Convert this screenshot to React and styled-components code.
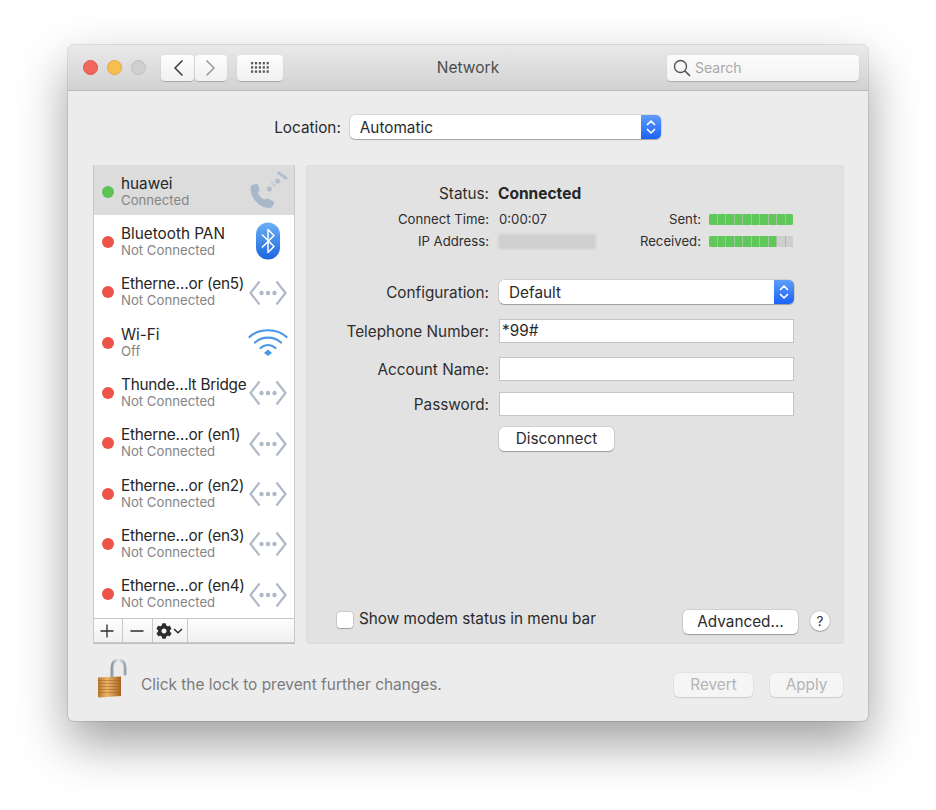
import React from 'react'
import styled, { createGlobalStyle } from 'styled-components'
import { FaCog } from 'react-icons/fa'

const Global = createGlobalStyle`
html, body {
  margin: 0;
  padding: 0;
  background: #fff;
}
body {
  font-family: Inter, "Liberation Sans", sans-serif;
  color: #2a2a2a;
  -webkit-font-smoothing: antialiased;
}
`

const Page = styled.div`
width: 936px;
height: 810px;
box-sizing: border-box;
padding: 45px 68px 0;
overflow: hidden;
`
const Window = styled.div`
width: 800px;
height: 676px;
border-radius: 6px;
background: #ececec;
box-shadow: 0 0 0 1px rgba(0, 0, 0, 0.1), 0 22px 50px rgba(0, 0, 0, 0.38);
display: flex;
flex-direction: column;
overflow: hidden;
`
const TitleBar = styled.div`
box-sizing: border-box;
height: 46px;
flex: none;
padding: 0 9px;
display: grid;
grid-template-columns: 1fr auto 1fr;
align-items: center;
background: linear-gradient(#e9e9e9, #d2d2d2);
border-bottom: 1px solid #b9b9b9;
`
const TitleLeft = styled.div`
display: flex;
align-items: center;
padding-left: 6px;
`
const Lights = styled.div`
display: flex;
gap: 9px;
margin-right: 15px;
`
const Light = styled.span`
width: 15px;
height: 15px;
box-sizing: border-box;
border-radius: 50%;
background: ${p => p.color};
border: 1px solid ${p => p.edge};
`
const NavGroup = styled.div`
display: flex;
gap: 1px;
margin-right: 10px;
`
const ToolButton = styled.div`
width: ${p => p.w}px;
height: 26px;
border-radius: 4px;
background: linear-gradient(#fdfdfd, #f1f1f1);
box-shadow: 0 1px 1px rgba(0, 0, 0, 0.22);
display: flex;
align-items: center;
justify-content: center;
`
const Title = styled.div`
font-size: 15.5px;
color: #4c4c4c;
`
const SearchBox = styled.div`
justify-self: end;
box-sizing: border-box;
width: 192px;
height: 26px;
border-radius: 4px;
background: linear-gradient(#fcfcfc, #f3f3f3);
box-shadow: 0 1px 1px rgba(0, 0, 0, 0.2);
display: flex;
align-items: center;
gap: 4px;
padding-left: 6px;
font-size: 14px;
color: #a9a9a9;
`
const Body = styled.div`
flex: 1;
display: flex;
flex-direction: column;
padding: 24px 24px 0 25px;
`
const LocationRow = styled.div`
display: flex;
justify-content: center;
align-items: center;
gap: 9px;
margin-left: -2px;
font-size: 15.3px;
`
const SelectBox = styled.div`
width: ${p => p.w}px;
height: 24px;
border-radius: 5px;
background: #fff;
box-shadow: 0 0 0 0.5px rgba(0, 0, 0, 0.16), 0 1px 1px rgba(0, 0, 0, 0.24);
display: flex;
align-items: center;
justify-content: space-between;
overflow: hidden;
font-size: 15.3px;
`
const SelectText = styled.span`
padding-left: 10px;
`
const Stepper = styled.span`
width: 20px;
height: 100%;
background: linear-gradient(#5f9dfb, #1a62f6);
display: flex;
align-items: center;
justify-content: center;
`
const Main = styled.div`
margin-top: 26px;
display: flex;
gap: 11px;
height: 479px;
`
const Sidebar = styled.div`
box-sizing: border-box;
width: 202px;
display: flex;
flex-direction: column;
background: #fff;
box-shadow: inset 0 0 0 1px #c9c9c9;
border-bottom: 1px solid #bdbdbd;
`
const List = styled.div`
flex: 1;
display: flex;
flex-direction: column;
padding: 0 1px;
`
const Row = styled.div`
flex: 1;
display: flex;
align-items: center;
padding: 0 6px 0 8px;
background: ${p => (p.selected ? '#dcdcdc' : 'transparent')};
`
const Dot = styled.span`
width: 12px;
height: 12px;
flex: none;
border-radius: 50%;
margin-top: 3px;
background: ${p => (p.on ? '#5cc453' : '#ec5449')};
`
const RowText = styled.div`
flex: 1;
margin: 3px 0 0 7px;
min-width: 0;
white-space: nowrap;
`
const RowName = styled.div`
font-size: 15.3px;
line-height: 17px;
letter-spacing: ${p => (p.cut ? '-0.23px' : 'normal')};
color: #262626;
`
const RowSub = styled.div`
font-size: 13.2px;
line-height: 17px;
color: #858585;
`
const RowIcon = styled.span`
width: 40px;
flex: none;
display: flex;
justify-content: center;
margin-top: 2px;
`
const BottomBar = styled.div`
height: 23px;
flex: none;
margin: 0 1px 1px;
display: flex;
background: linear-gradient(#fdfdfd, #f1f1f1);
border-top: 1px solid #c6c6c6;
`
const BarButton = styled.div`
width: ${p => p.w}px;
box-sizing: border-box;
border-right: 1px solid #c9c9c9;
padding-right: 2px;
display: flex;
align-items: center;
justify-content: center;
gap: 1px;
color: #2c2c2c;
`
const Panel = styled.div`
flex: 1;
box-sizing: border-box;
border-radius: 4px;
background: #e2e2e2;
box-shadow: inset 0 0 0 1px #dcdcdc;
display: flex;
flex-direction: column;
padding: 18px 50px 10px 0;
`
const FormRow = styled.div`
display: flex;
align-items: center;
gap: 9px;
margin-top: ${p => p.top || 0}px;
min-height: 20px;
`
const Label = styled.div`
width: 183px;
margin-right: 1px;
flex: none;
text-align: right;
font-size: ${p => (p.small ? 13.2 : 15.3)}px;
color: #2e2e2e;
`
const StatusValue = styled.div`
margin-left: -1px;
font-size: 15.5px;
font-weight: 700;
color: #262626;
`
const PlainValue = styled.div`
font-size: 13.2px;
color: #2e2e2e;
`
const BlurValue = styled.div`
width: 98px;
height: 15px;
margin-left: -1px;
background: #cfcfcf;
filter: blur(1.5px);
`
const MeterWrap = styled.div`
margin-left: auto;
display: flex;
align-items: center;
gap: 8px;
font-size: 13.2px;
color: #2e2e2e;
`
const Meter = styled.div`
width: 84px;
height: 11px;
border-radius: 2px;
overflow: hidden;
display: grid;
grid-template-columns: repeat(10, 1fr);
gap: 1px;
margin-right: 1px;
background: #a3c4a0;
`
const Seg = styled.span`
background: ${p => (p.on ? '#5fc858' : '#cfcfcf')};
`
const TextInput = styled.div`
box-sizing: border-box;
width: 295px;
height: 24px;
padding-left: 3px;
background: #fff;
box-shadow: inset 0 0 0 1px #c4c4c4;
font-size: 15.3px;
line-height: 23px;
`
const PushButton = styled.div`
box-sizing: border-box;
width: ${p => p.w}px;
height: 24px;
padding-bottom: 1px;
border-radius: 5px;
background: ${p => (p.disabled ? '#f5f5f5' : '#fff')};
color: ${p => (p.disabled ? '#b4b4b4' : '#2a2a2a')};
box-shadow: 0 0 0 0.5px rgba(0, 0, 0, ${p => (p.disabled ? 0.08 : 0.16)}), 0 1px 1px rgba(0, 0, 0, ${p => (p.disabled ? 0.1 : 0.24)});
display: flex;
align-items: center;
justify-content: center;
font-size: 15.3px;
`
const PanelBottom = styled.div`
margin-top: auto;
display: flex;
align-items: center;
padding-left: 31px;
margin-right: -36px;
font-size: 15.3px;
`
const Check = styled.span`
width: 16px;
height: 16px;
box-sizing: border-box;
margin-right: 6px;
margin-top: -5px;
border-radius: 3px;
background: #fff;
box-shadow: 0 0 0 0.5px rgba(0, 0, 0, 0.2), 0 1px 1px rgba(0, 0, 0, 0.2);
`
const CheckLabel = styled.span`
margin-top: -7px;
flex: 1;
`
const Help = styled.div`
width: 20px;
height: 20px;
margin: -2px 0 0 12px;
border-radius: 50%;
background: #fff;
box-shadow: 0 0 0 0.5px rgba(0, 0, 0, 0.14), 0 1px 1px rgba(0, 0, 0, 0.24);
display: flex;
align-items: center;
justify-content: center;
font-size: 13.5px;
`
const Footer = styled.div`
display: flex;
align-items: center;
margin-top: 15px;
padding-left: 4px;
padding-right: 1px;
`
const LockText = styled.div`
margin: 11px 0 0 14px;
flex: 1;
font-size: 15.4px;
color: #7b7b7b;
`
const FooterButtons = styled.div`
display: flex;
gap: 17px;
margin-top: 11px;
`

const UpDown = () => (
  <svg width="12" height="18" viewBox="0 0 12 18" fill="none" stroke="#fff" strokeWidth="1.7" strokeLinecap="round" strokeLinejoin="round">
    <path d="M2.5 6.5 L6 3 L9.5 6.5" />
    <path d="M2.5 11.5 L6 15 L9.5 11.5" />
  </svg>
)

const Select = ({ w, children }) => (
  <SelectBox w={w}>
    <SelectText>{children}</SelectText>
    <Stepper><UpDown /></Stepper>
  </SelectBox>
)

const Chevron = ({ dir, color }) => (
  <svg width="12" height="18" viewBox="0 0 12 18" fill="none" stroke={color} strokeWidth="1.7" strokeLinecap="round" strokeLinejoin="round">
    <path d={dir === 'left' ? 'M10 2 L3 9 L10 16' : 'M2 2 L9 9 L2 16'} />
  </svg>
)

const GridIcon = () => {
  const dots = []
  for (let y = 0; y < 3; y++) {
    for (let x = 0; x < 5; x++) {
      dots.push(<rect key={x + '-' + y} x={x * 3.9} y={y * 4.2} width="2.2" height="2.4" fill="#5a5a5a" />)
    }
  }
  return <svg width="18" height="11" viewBox="0 0 18 11">{dots}</svg>
}

const SearchIcon = () => (
  <svg width="18" height="18" viewBox="0 0 18 18" fill="none" stroke="#555" strokeWidth="1.4" strokeLinecap="round">
    <circle cx="7.5" cy="7.5" r="6" />
    <path d="M12 12 L16.5 16.5" strokeWidth="1.7" />
  </svg>
)

const PhoneIcon = () => (
  <svg width="40" height="40" viewBox="0 0 40 40" fill="none">
    <path d="M4 14 L8.5 13 Q10 13 10.5 15 L11.5 19 Q11.5 20.5 10 21 Q10 23 12 25.5 Q14.5 28 17 28.5 Q18 27 19.5 27.5 L25 30 Q26.5 31 26 32.5 L24.5 35.5 Q23 37.5 20 37 C10 36 3 27 2.5 17 Q2.5 15 4 14 Z" fill="#a9b7ca" />
    <circle cx="21.3" cy="18" r="2.6" fill="#b3bfce" />
    <circle cx="29.5" cy="10" r="2.6" fill="#b3bfce" />
    <path d="M24 12 L27 15" stroke="#c4ccd7" strokeWidth="2" strokeLinecap="round" />
    <path d="M30.7 2 L38 7" stroke="#b3bfce" strokeWidth="3" strokeLinecap="round" />
  </svg>
)

const BluetoothIcon = () => (
  <svg width="26" height="38" viewBox="0 0 26 38">
    <defs>
      <linearGradient id="btg" x1="0" y1="0" x2="0" y2="1">
        <stop offset="0" stopColor="#6bb0f5" />
        <stop offset="1" stopColor="#1c66e0" />
      </linearGradient>
    </defs>
    <rect x="1" y="0.5" width="24" height="37" rx="12" fill="url(#btg)" />
    <path d="M7 12.5 L19 24.5 L13 30.5 L13 7.5 L19 13.5 L7 25.5" fill="none" stroke="#fff" strokeWidth="1.5" strokeLinejoin="round" />
  </svg>
)

const EthernetIcon = () => (
  <svg width="38" height="26" viewBox="0 -1 38 26" fill="none">
    <path d="M10.5 1.5 L1.5 13 L10.5 24.5" stroke="#b0b9c8" strokeWidth="2.2" strokeLinejoin="round" />
    <path d="M27.5 1.5 L36.5 13 L27.5 24.5" stroke="#b0b9c8" strokeWidth="2.2" strokeLinejoin="round" />
    <circle cx="12.5" cy="13" r="2.2" fill="#b0b9c8" />
    <circle cx="19" cy="13" r="2.2" fill="#b0b9c8" />
    <circle cx="25.5" cy="13" r="2.2" fill="#b0b9c8" />
  </svg>
)

const WifiIcon = () => (
  <svg width="40" height="30" viewBox="0 0 40 30" fill="none" stroke="#4a97e8" strokeLinecap="round">
    <path d="M1.5 10 C11 1 29 1 38.5 10" strokeWidth="2.2" />
    <path d="M7 15.5 C14 9 26 9 33 15.5" strokeWidth="2.2" />
    <path d="M12.5 21 C17 17 23 17 27.5 21" strokeWidth="2.2" />
    <path d="M16 26 L20 22.5 L24 26 L20 29 Z" fill="#4a97e8" stroke="none" />
  </svg>
)

const LockIcon = () => (
  <svg width="30" height="40" viewBox="0 0 30 40" fill="none">
    <defs>
      <linearGradient id="lockg" x1="0" y1="0" x2="1" y2="0">
        <stop offset="0" stopColor="#b9782c" />
        <stop offset="0.4" stopColor="#eab568" />
        <stop offset="1" stopColor="#a8651f" />
      </linearGradient>
      <linearGradient id="shackle" x1="0" y1="0" x2="1" y2="0">
        <stop offset="0" stopColor="#8f9aa3" />
        <stop offset="0.5" stopColor="#e6ebef" />
        <stop offset="1" stopColor="#9aa3ab" />
      </linearGradient>
    </defs>
    <path d="M15 19 L15 8 C15 -1 28 -1 28 8 L28 15" stroke="url(#shackle)" strokeWidth="3" strokeLinecap="round" />
    <path d="M1 18.5 L24 17.5 L24 37 L2 38.5 Q1 38.5 1 37.5 Z" fill="url(#lockg)" />
    <path d="M1 21.5 H24 M1 24.5 H24 M1 27.5 H24 M1 30.5 H24 M1 33.5 H24" stroke="#9c6122" strokeWidth="0.8" opacity="0.6" />
  </svg>
)

const PlusIcon = () => (
  <svg width="14" height="14" viewBox="0 0 14 14" stroke="#2c2c2c" strokeWidth="1.3">
    <path d="M7 0.5 V13.5 M0.5 7 H13.5" />
  </svg>
)

const MinusIcon = () => (
  <svg width="14" height="14" viewBox="0 0 14 14" stroke="#2c2c2c" strokeWidth="1.3">
    <path d="M0.5 7 H13.5" />
  </svg>
)

const SmallChevron = () => (
  <svg width="10" height="6" viewBox="0 0 10 6" fill="none" stroke="#2c2c2c" strokeWidth="1.5">
    <path d="M1 1 L5 4.8 L9 1" />
  </svg>
)

const services = [
  { name: 'huawei', sub: 'Connected', on: true, icon: <PhoneIcon /> },
  { name: 'Bluetooth PAN', sub: 'Not Connected', icon: <BluetoothIcon /> },
  { name: 'Etherne…or (en5)', sub: 'Not Connected', cut: true, icon: <EthernetIcon /> },
  { name: 'Wi-Fi', sub: 'Off', icon: <WifiIcon /> },
  { name: 'Thunde…lt Bridge', sub: 'Not Connected', cut: true, icon: <EthernetIcon /> },
  { name: 'Etherne…or (en1)', sub: 'Not Connected', cut: true, icon: <EthernetIcon /> },
  { name: 'Etherne…or (en2)', sub: 'Not Connected', cut: true, icon: <EthernetIcon /> },
  { name: 'Etherne…or (en3)', sub: 'Not Connected', cut: true, icon: <EthernetIcon /> },
  { name: 'Etherne…or (en4)', sub: 'Not Connected', cut: true, icon: <EthernetIcon /> },
]

const Levels = ({ count }) => (
  <Meter>
    {Array.from({ length: 10 }, (_, i) => <Seg key={i} on={i < count} />)}
  </Meter>
)

const App = () => {
  return (
    <Page>
      <Global />
      <Window>
        <TitleBar>
          <TitleLeft>
            <Lights>
              <Light color="#f2655c" edge="#e0554c" />
              <Light color="#f6bd4f" edge="#e5a93d" />
              <Light color="#cfcfcf" edge="#c0c0c0" />
            </Lights>
            <NavGroup>
              <ToolButton w={33}><Chevron dir="left" color="#444" /></ToolButton>
              <ToolButton w={32}><Chevron dir="right" color="#9d9d9d" /></ToolButton>
            </NavGroup>
            <ToolButton w={46}><GridIcon /></ToolButton>
          </TitleLeft>
          <Title>Network</Title>
          <SearchBox><SearchIcon />Search</SearchBox>
        </TitleBar>
        <Body>
          <LocationRow>
            Location:
            <Select w={311}>Automatic</Select>
          </LocationRow>
          <Main>
            <Sidebar>
              <List>
                {services.map((s, i) => (
                  <Row key={s.name} selected={i === 0}>
                    <Dot on={s.on} />
                    <RowText>
                      <RowName cut={s.cut}>{s.name}</RowName>
                      <RowSub>{s.sub}</RowSub>
                    </RowText>
                    <RowIcon>{s.icon}</RowIcon>
                  </Row>
                ))}
              </List>
              <BottomBar>
                <BarButton w={29}><PlusIcon /></BarButton>
                <BarButton w={30}><MinusIcon /></BarButton>
                <BarButton w={35}><FaCog size={16} /><SmallChevron /></BarButton>
              </BottomBar>
            </Sidebar>
            <Panel>
              <FormRow>
                <Label>Status:</Label>
                <StatusValue>Connected</StatusValue>
              </FormRow>
              <FormRow top={6}>
                <Label small>Connect Time:</Label>
                <PlainValue>0:00:07</PlainValue>
                <MeterWrap>Sent:<Levels count={10} /></MeterWrap>
              </FormRow>
              <FormRow top={2}>
                <Label small>IP Address:</Label>
                <BlurValue />
                <MeterWrap>Received:<Levels count={8} /></MeterWrap>
              </FormRow>
              <FormRow top={29}>
                <Label>Configuration:</Label>
                <Select w={295}>Default</Select>
              </FormRow>
              <FormRow top={15}>
                <Label>Telephone Number:</Label>
                <TextInput>*99#</TextInput>
              </FormRow>
              <FormRow top={14}>
                <Label>Account Name:</Label>
                <TextInput />
              </FormRow>
              <FormRow top={11}>
                <Label>Password:</Label>
                <TextInput />
              </FormRow>
              <FormRow top={11}>
                <Label />
                <PushButton w={115}>Disconnect</PushButton>
              </FormRow>
              <PanelBottom>
                <Check />
                <CheckLabel>Show modem status in menu bar</CheckLabel>
                <PushButton w={115}>Advanced…</PushButton>
                <Help>?</Help>
              </PanelBottom>
            </Panel>
          </Main>
          <Footer>
            <LockIcon />
            <LockText>Click the lock to prevent further changes.</LockText>
            <FooterButtons>
              <PushButton w={79} disabled>Revert</PushButton>
              <PushButton w={73} disabled>Apply</PushButton>
            </FooterButtons>
          </Footer>
        </Body>
      </Window>
    </Page>
  )
}

export default App
